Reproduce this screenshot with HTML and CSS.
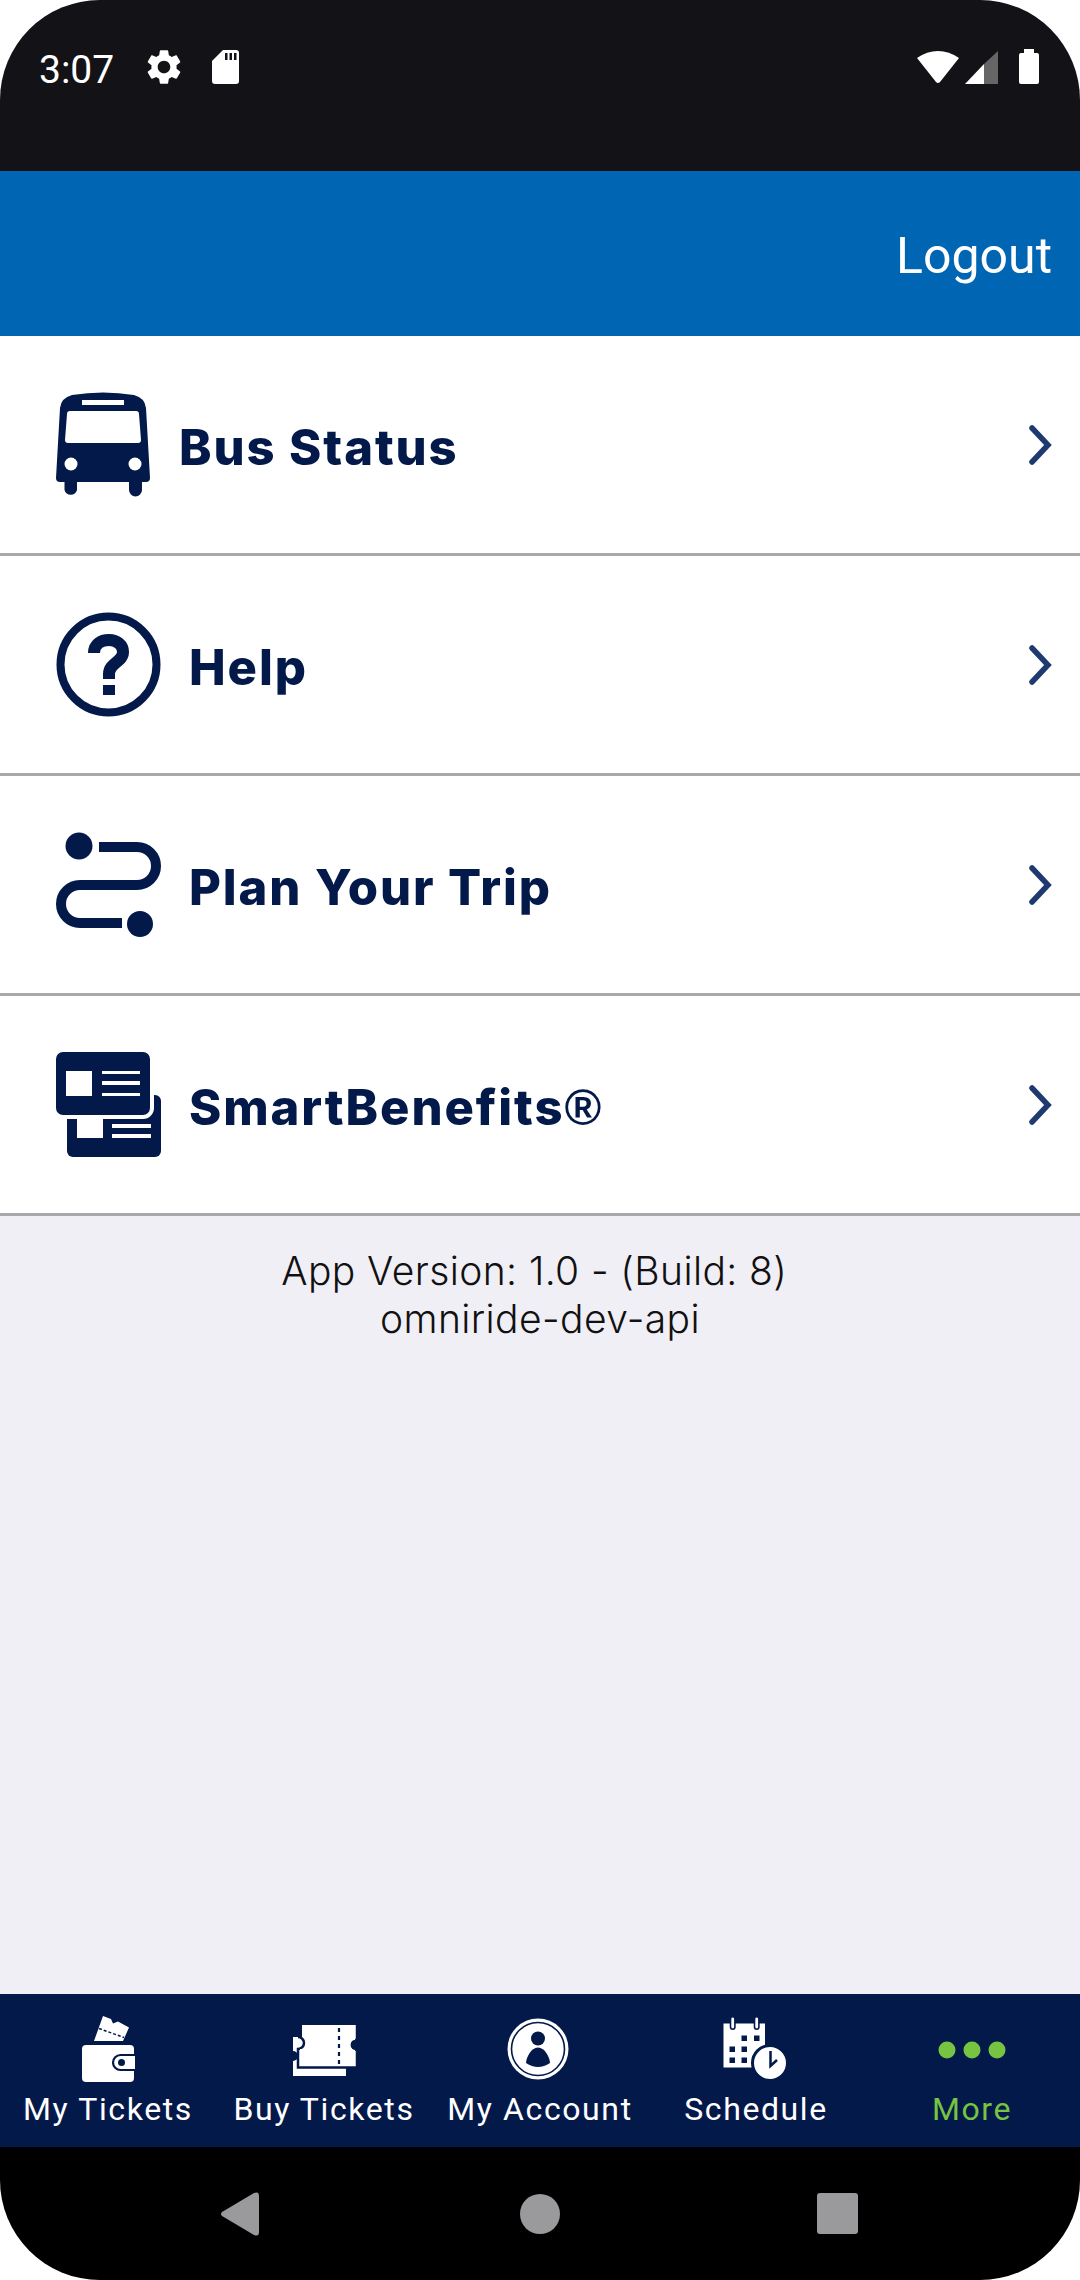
FILE: index.html
```html
<!DOCTYPE html>
<html lang="en">
<head>
    <meta charset="UTF-8">
    <meta name="viewport" content="width=device-width, initial-scale=1.0">
    <title>More</title>
    <link rel="stylesheet" href="styles.css">
</head>
<body>
    <div class="phone">
        <!-- Android status bar -->
        <div class="status-bar">
            <span class="status-time">3:07</span>
            <svg class="status-gear" viewBox="0 0 24 24"><path fill="#fff" d="M19.14 12.94c.04-.3.06-.61.06-.94 0-.32-.02-.64-.07-.94l2.03-1.58c.18-.14.23-.41.12-.61l-1.92-3.32c-.12-.22-.37-.29-.59-.22l-2.39.96c-.5-.38-1.03-.7-1.62-.94l-.36-2.54c-.04-.24-.24-.41-.48-.41h-3.84c-.24 0-.43.17-.47.41l-.36 2.54c-.59.24-1.13.57-1.62.94l-2.39-.96c-.22-.08-.47 0-.59.22L2.74 8.87c-.12.21-.08.47.12.61l2.03 1.58c-.05.3-.09.63-.09.94s.02.64.07.94l-2.03 1.58c-.18.14-.23.41-.12.61l1.92 3.32c.12.22.37.29.59.22l2.39-.96c.5.38 1.03.7 1.62.94l.36 2.54c.05.24.24.41.48.41h3.84c.24 0 .44-.17.47-.41l.36-2.54c.59-.24 1.13-.56 1.62-.94l2.39.96c.22.08.47 0 .59-.22l1.92-3.32c.12-.22.07-.47-.12-.61l-2.01-1.58zM12 15.6c-1.98 0-3.6-1.62-3.6-3.6s1.62-3.6 3.6-3.6 3.6 1.62 3.6 3.6-1.62 3.6-3.6 3.6z"/></svg>
            <svg class="status-sd" viewBox="0 0 27 34">
                <path fill="#fff" d="M11 0H24a3 3 0 0 1 3 3V31a3 3 0 0 1-3 3H3a3 3 0 0 1-3-3V11z"/>
                <path fill="#131216" d="M13 3h2.500v7H13zM17.500 3H20v7h-2.500zM22 3h2.500v7H22z"/>
            </svg>
            <svg class="status-right" viewBox="0 0 122 42">
                <path fill="#fff" d="M0 12Q10 5 21 5T42 12L23 36Q21 38 19 36z"/>
                <path fill="#fff" d="M48 38L67 18V38z"/>
                <path fill="#666" d="M67 18L81 5V38H67z"/>
                <path fill="#fff" d="M107 3h10v4h3a2 2 0 0 1 2 2V36a2 2 0 0 1-2 2H104a2 2 0 0 1-2-2V9a2 2 0 0 1 2-2h3z"/>
            </svg>
        </div>

        <div class="app-header">
            <a class="logout" href="#">Logout</a>
        </div>

        <div class="menu-list">
            <a class="menu-row" href="#">
                <svg class="icon-bus" viewBox="0 0 95 105">
                    <path fill="#03194a" d="M4 16Q5 6 16 3Q47-2 78 3Q89 6 90 16L94 86Q94 90 90 90H86V98a6.500 6.500 0 0 1-13 0V90H21V98a6.500 6.500 0 0 1-12.500 0V90H4Q0 90 0 86z"/>
                    <path fill="#fff" d="M26 8H68V13H26zM14 19H80Q83 19 83 22L85 48Q85 51 82 51H12Q9 51 9 48L11 22Q11 19 14 19z"/>
                    <circle fill="#fff" cx="15" cy="72" r="6.500"/>
                    <circle fill="#fff" cx="79" cy="72" r="6.500"/>
                </svg>
                <span class="menu-label">Bus Status</span>
                <svg class="chevron" viewBox="0 0 24 40"><path fill="none" stroke="#1f3a6e" stroke-width="5.500" stroke-linecap="round" d="M4 3L20 20L4 37"/></svg>
            </a>
            <a class="menu-row" href="#">
                <svg class="icon-wide" viewBox="0 0 105 105">
                    <circle fill="none" stroke="#03194a" stroke-width="8" cx="52.500" cy="52.500" r="48"/>
                    <path fill="none" stroke="#03194a" stroke-width="12" d="M38 41C38 32 45 28 53 28C61 28 67 33 67 40C67 50 53 51 53 62V67"/>
                    <rect fill="#03194a" x="47" y="73" width="12" height="10"/>
                </svg>
                <span class="menu-label">Help</span>
                <svg class="chevron" viewBox="0 0 24 40"><path fill="none" stroke="#1f3a6e" stroke-width="5.500" stroke-linecap="round" d="M4 3L20 20L4 37"/></svg>
            </a>
            <a class="menu-row" href="#">
                <svg class="icon-wide" viewBox="0 0 105 105">
                    <circle fill="#03194a" cx="23" cy="14" r="13.500"/>
                    <circle fill="#03194a" cx="84" cy="92" r="13"/>
                    <path fill="none" stroke="#03194a" stroke-width="10" d="M43 15H81A19 19 0 0 1 81 53H24A19 19 0 0 0 24 91H66"/>
                </svg>
                <span class="menu-label">Plan Your Trip</span>
                <svg class="chevron" viewBox="0 0 24 40"><path fill="none" stroke="#1f3a6e" stroke-width="5.500" stroke-linecap="round" d="M4 3L20 20L4 37"/></svg>
            </a>
            <a class="menu-row" href="#">
                <svg class="icon-wide" viewBox="0 0 105 105">
                    <rect fill="#03194a" x="11" y="43" width="94" height="62" rx="6"/>
                    <rect fill="#03194a" stroke="#fff" stroke-width="4" x="-2" y="-2" width="98" height="67" rx="9"/>
                    <path fill="#fff" d="M10 19H36V44H10zM46 19H84V22H46zM46 29H84V33H46zM46 41H84V44H46zM21 67H47V86H21zM56 72H95V76H56zM56 82H95V86H56z"/>
                </svg>
                <span class="menu-label">SmartBenefits<span class="menu-reg">®</span></span>
                <svg class="chevron" viewBox="0 0 24 40"><path fill="none" stroke="#1f3a6e" stroke-width="5.500" stroke-linecap="round" d="M4 3L20 20L4 37"/></svg>
            </a>
        </div>

        <div class="content">
            <p class="version">App Version: 1.0 - (Build: 8)&nbsp;<br>omniride-dev-api</p>
        </div>

        <div class="tab-bar">
            <a class="tab" href="#">
                <svg class="tab-icon" viewBox="0 0 70 70">
                    <path fill="#fff" d="M30 2L38 5L40 9.500L45 7.500L56 13.500L50 27L21 27z"/>
                    <path fill="none" stroke="#03194a" stroke-width="1.500" stroke-dasharray="3 2" d="M26 14.500L51 23.500"/>
                    <path fill="#fff" d="M13 31H57a4 4 0 0 1 4 4V64a4 4 0 0 1-4 4H13a4 4 0 0 1-4-4V35a4 4 0 0 1 4-4z"/>
                    <path fill="#fff" stroke="#03194a" stroke-width="2.200" d="M62 41H47.500a7.500 7.500 0 0 0 0 15H62"/>
                    <circle fill="#03194a" cx="48.500" cy="48.500" r="3.500"/>
                </svg>
                <span class="tab-label">My Tickets</span>
            </a>
            <a class="tab" href="#">
                <svg class="tab-icon" viewBox="0 0 70 70">
                    <path fill="#fff" d="M4 23H57V62H4z"/>
                    <path fill="#03194a" d="M4 37a5 5 0 0 1 0 10z"/>
                    <path fill="#fff" stroke="#03194a" stroke-width="2.500" d="M12 9.800H68V25.500A5 5 0 0 0 68 36V53.500H9V35A6 6 0 0 0 9 23L12 23z"/>
                    <path fill="#fff" d="M13 11H66V26A5 5 0 0 0 66 36V52H11V35A6 6 0 0 0 13 23z"/>
                    <path fill="none" stroke="#03194a" stroke-width="2.200" stroke-dasharray="4 4" d="M50 14V50"/>
                </svg>
                <span class="tab-label">Buy Tickets</span>
            </a>
            <a class="tab" href="#">
                <svg class="tab-icon" viewBox="0 0 70 70">
                    <circle fill="#fff" cx="33" cy="35" r="30.500"/>
                    <circle fill="none" stroke="#03194a" stroke-width="1.600" cx="33" cy="35" r="26.500"/>
                    <circle fill="#03194a" cx="33" cy="24.500" r="7"/>
                    <path fill="#03194a" d="M33 33.500C40 33.500 45 44 45 49Q39 53 33 53Q27 53 21 49C21 44 26 33.500 33 33.500z"/>
                </svg>
                <span class="tab-label">My Account</span>
            </a>
            <a class="tab" href="#">
                <svg class="tab-icon" viewBox="0 0 70 70">
                    <path fill="#fff" d="M2.500 9.500H44V53.500H2.500z"/>
                    <path fill="#fff" stroke="#03194a" stroke-width="1.600" d="M9.500 5a2.200 2.200 0 0 1 4.400 0V13a2.200 2.200 0 0 1-4.400 0zM33.500 5a2.200 2.200 0 0 1 4.400 0V13a2.200 2.200 0 0 1-4.400 0z"/>
                    <path fill="#03194a" d="M20.500 21.500h5.500v5.500h-5.500zM33 21.500h5.500v5.500H33zM8.500 32.500h5.500v5.500H8.500zM20.500 32.500h5.500v5.500h-5.500zM8.500 43.500h5.500v5.500H8.500zM20.500 43.500h5.500v5.500h-5.500z"/>
                    <circle fill="#fff" stroke="#03194a" stroke-width="3" cx="49" cy="49" r="17.500"/>
                    <path fill="none" stroke="#03194a" stroke-width="2.500" d="M49.500 37V52L56 46"/>
                </svg>
                <span class="tab-label">Schedule</span>
            </a>
            <a class="tab tab-active" href="#">
                <svg class="tab-icon" viewBox="0 0 70 70">
                    <circle fill="#76c442" cx="10" cy="36" r="8.500"/>
                    <circle fill="#76c442" cx="35" cy="36" r="8.500"/>
                    <circle fill="#76c442" cx="60" cy="36" r="8.500"/>
                </svg>
                <span class="tab-label">More</span>
            </a>
        </div>

        <!-- Android nav bar -->
        <div class="nav-bar">
            <svg class="nav-back" viewBox="0 0 38 44"><path fill="#9a999c" d="M1 24Q-1 22 1 20L33 1Q38-1 38 4V40Q38 45 33 43z"/></svg>
            <span class="nav-home"></span>
            <span class="nav-recent"></span>
        </div>
    </div>
</body>
</html>
```

FILE: styles.css
```css
body {
    margin: 0;
    padding: 0;
    background-color: #ffffff;
    font-family: 'Roboto', sans-serif;
}

a {
    text-decoration: none;
    color: inherit;
}

.phone {
    width: 1080px;
    height: 2280px;
    display: flex;
    flex-direction: column;
    border-radius: 100px;
    overflow: hidden;
    background-color: #f1eff6;
}

.status-bar {
    height: 171px;
    box-sizing: border-box;
    flex-shrink: 0;
    display: flex;
    align-items: flex-start;
    padding: 46px 41px 0 39px;
    background-color: #131216;
}

.status-time {
    font-size: 39px;
    line-height: 44px;
    margin-top: 2px;
    color: #ffffff;
}

.status-gear {
    width: 42px;
    height: 42px;
    margin-left: 29px;
}

.status-sd {
    width: 27px;
    height: 34px;
    margin-top: 4px;
    margin-left: 27px;
}

.status-right {
    width: 122px;
    height: 42px;
    margin-left: auto;
}

.app-header {
    height: 165px;
    box-sizing: border-box;
    flex-shrink: 0;
    display: flex;
    align-items: center;
    justify-content: flex-end;
    padding: 4px 28px 0 0;
    background-color: #0066b3;
}

.logout {
    font-size: 50px;
    font-weight: 400;
    color: #ffffff;
}

.menu-row {
    height: 217px;
    display: flex;
    align-items: center;
    gap: 28px;
    padding: 0 28px 0 56px;
    background-color: #ffffff;
    border-bottom: 3px solid #a9a9ad;
}

.icon-bus {
    width: 95px;
    height: 105px;
}

.icon-wide {
    width: 105px;
    height: 105px;
}

.menu-label {
    padding-top: 5px;
    font-family: 'Inter', sans-serif;
    font-size: 49px;
    font-weight: 800;
    letter-spacing: 1.900px;
    color: #03194a;
}

.menu-reg {
    font-family: 'Liberation Sans', sans-serif;
    font-size: 50px;
    font-weight: 700;
}

.chevron {
    width: 24px;
    height: 40px;
    margin-left: auto;
}

.content {
    flex: 1;
}

.version {
    margin: 0;
    padding-top: 31px;
    font-family: 'Inter', sans-serif;
    font-size: 39px;
    font-weight: 300;
    line-height: 48px;
    letter-spacing: 0.4px;
    text-align: center;
    color: #111111;
}

.tab-bar {
    height: 153px;
    box-sizing: border-box;
    flex-shrink: 0;
    display: flex;
    padding-top: 20px;
    background-color: #03194a;
}

.tab {
    width: 216px;
    display: flex;
    flex-direction: column;
    align-items: center;
    color: #ffffff;
}

.tab-icon {
    width: 70px;
    height: 70px;
}

.tab-label {
    margin-top: 3px;
    font-size: 32px;
    line-height: 44px;
    letter-spacing: 1.600px;
    white-space: nowrap;
}

.tab-active {
    color: #76c442;
}

.nav-bar {
    height: 133px;
    flex-shrink: 0;
    display: flex;
    align-items: center;
    background-color: #000000;
    padding-left: 221px;
}

.nav-back {
    width: 38px;
    height: 44px;
}

.nav-home {
    width: 40px;
    height: 40px;
    margin-left: 261px;
    border-radius: 50%;
    background-color: #9a999c;
}

.nav-recent {
    width: 41px;
    height: 41px;
    margin-left: 257px;
    border-radius: 3px;
    background-color: #9a999c;
}
```
